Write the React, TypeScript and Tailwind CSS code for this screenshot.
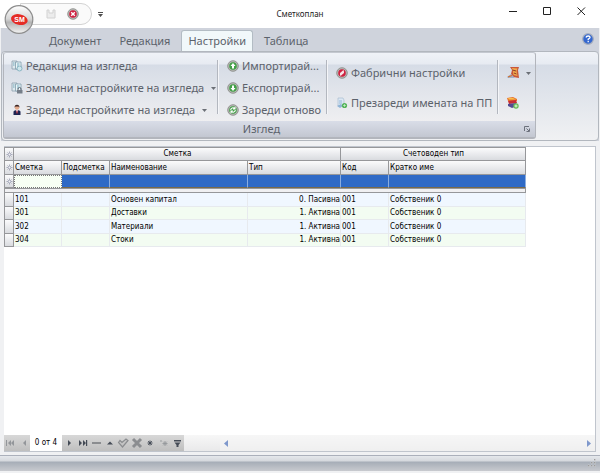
import React from 'react';

type IconProps = { className?: string };

const LayoutIcon: React.FC<{ lock?: boolean }> = ({ lock }) => (
  <svg viewBox="0 0 12 12" className="size-3 shrink-0">
    <path d="M1 1h5v8H1z" fill="#dfe9ee" stroke="#8ba0ac" strokeWidth=".8" />
    <path d="M4.500 2h5.500v7H4.500z" fill="#eaf4f7" stroke="#7f9dab" strokeWidth=".8" />
    <path d="M2 3h1.500M2 5h1.500M6 4h2.500M6 6h2" stroke="#67a3b5" strokeWidth=".9" />
    {lock ? (
      <>
        <path d="M7 8V7a1.500 1.500 0 0 1 3 0v1" fill="none" stroke="#5b6470" />
        <path d="M6 8h5.500v3.500H6z" fill="#757e89" />
      </>
    ) : (
      <circle cx="8.500" cy="8.500" r="2.500" fill="#cfe6ec" stroke="#7aa9b9" strokeWidth=".8" />
    )}
  </svg>
);

const PersonIcon = () => (
  <svg viewBox="0 0 12 12" className="size-3 shrink-0">
    <path d="M2.500 11V7.500Q3 6 6 6t3.500 1.500V11z" fill="#1d2452" />
    <circle cx="6" cy="3.500" r="2.300" fill="#e3aa8c" />
    <path d="M3.600 3.500Q3.500.7 6 .7t2.400 2.800L7.500 2.500h-3z" fill="#3a2422" />
    <path d="M5 6h2L6 9z" fill="#fff" />
    <path d="M6 6.500v3" stroke="#d4303c" />
  </svg>
);

const RoundIcon: React.FC<{ kind: 'up' | 'down' | 'reload' | 'factory' | 'close' }> = ({ kind }) => {
  const red = kind === 'factory' || kind === 'close';
  return (
    <svg viewBox="0 0 12 12" className="size-3 shrink-0">
      <circle cx="6" cy="6" r="5.300" fill="#b9b9b6" stroke="#848682" strokeWidth=".8" />
      <circle cx="6" cy="6" r="3.800" fill={red ? '#cf2140' : '#43a047'} />
      {kind === 'up' && <path d="M6 3 8.500 6H7v2.500H5V6H3.500z" fill="#fff" />}
      {kind === 'down' && <path d="M6 9 8.500 6H7V3.500H5V6H3.500z" fill="#fff" />}
      {kind === 'reload' && (
        <path d="M3.700 6a2.300 2.300 0 0 1 4-1.500M8.300 6a2.300 2.300 0 0 1-4 1.500M8 3v2H6M4 9V7h2" fill="none" stroke="#fff" strokeWidth="1.100" />
      )}
      {kind === 'factory' && <path d="M4 8V6l3.500-3L8 4.500v1.500L4.500 9z" fill="#f6e6e8" />}
      {kind === 'close' && <path d="m4.200 4.200 3.600 3.600m0-3.600L4.200 7.800" stroke="#fff" strokeWidth="1.400" />}
    </svg>
  );
};

const ReloadNamesIcon = () => (
  <svg viewBox="0 0 12 12" className="size-3 shrink-0">
    <path d="M2 1h5l1 2v6H2z" fill="#dbe7f3" stroke="#a9bdd1" strokeWidth=".7" />
    <path d="M3 4h3M3 6h3" stroke="#86aed3" strokeWidth=".8" />
    <path d="m1 9 4-2 2 2-3 2z" fill="#8fb4d6" />
    <circle cx="8.500" cy="8.500" r="2.600" fill="#54b35b" />
    <path d="M7.200 8.500h2.600M8.500 7.200v2.600" stroke="#c9efca" strokeWidth=".8" />
  </svg>
);

const ExportIcon = () => (
  <svg viewBox="0 0 14 14" className="size-3.5 shrink-0">
    <path d="M4 1h9l-1 3 1 8-6-1-2-3 1-4z" fill="#c9573a" />
    <path d="m6 2 5.500.5L10.500 5l1 5-4-1L7 5z" fill="#f0ab4e" />
    <path d="m6.500 4 3.500 1M8 7l2.500 1" stroke="#8b3d28" />
    <path d="m1 11 4-3 4 4H2z" fill="#a2b2cc" />
    <path d="m2 11 4-1.500" stroke="#d5722f" strokeWidth="1.200" />
  </svg>
);

const BooksIcon = () => (
  <svg viewBox="0 0 14 14" className="size-3.5 shrink-0">
    <path d="m1 2 6-1 4 2v2L2 5z" fill="#e9732c" />
    <path d="M2 2h5l3 1.500H3z" fill="#f8c04a" />
    <path d="m2 5 8-1 1 3-8 1z" fill="#c72d35" />
    <path d="m2 8 8-1 1 3-5 2-4-2z" fill="#534b91" />
    <circle cx="10" cy="10" r="2.700" fill="#66b956" />
    <path d="M8.500 10h3M10 8.500v3" stroke="#dff5d6" />
  </svg>
);

const SparkIcon: React.FC<IconProps> = ({ className = '' }) => (
  <svg viewBox="0 0 7 7" className={`mx-auto size-[7px] ${className}`}>
    <path d="M3.500.5v6M.5 3.500h6M1.500 1.500l4 4m0-4-4 4" stroke="#8d91a6" strokeWidth=".7" />
    <circle cx="3.500" cy="3.500" r="1" fill="#f1f1f4" />
  </svg>
);

const Caret = () => (
  <svg viewBox="0 0 5 3" className="h-[3px] w-[5px] shrink-0">
    <path d="M0 0h5L2.500 3z" fill="#6b6f76" />
  </svg>
);

interface RibbonButtonProps {
  icon: React.ReactNode;
  label: string;
  menu?: boolean;
}

const RibbonButton: React.FC<RibbonButtonProps> = ({ icon, label, menu }) => (
  <button type="button" className="flex h-[22px] items-center gap-[3px] whitespace-nowrap">
    {icon}
    <span>{label}</span>
    {menu && <span className="ml-1"><Caret /></span>}
  </button>
);

const Divider = () => <div className="my-[7px] w-px shrink-0 bg-[#b3b7bf] shadow-[1px_0_0_#f4f5f8]" />;

const tabs = ['Документ', 'Редакция', 'Настройки', 'Таблица'];

const rows = [
  { account: '101', name: 'Основен капитал', type: '0. Пасивна', code: '001', owner: 'Собственик 0' },
  { account: '301', name: 'Доставки', type: '1. Активна', code: '001', owner: 'Собственик 0' },
  { account: '302', name: 'Материали', type: '1. Активна', code: '001', owner: 'Собственик 0' },
  { account: '304', name: 'Стоки', type: '1. Активна', code: '001', owner: 'Собственик 0' },
];

const navButtons = [
  { label: 'Следващ', shape: <path d="M5 3v6l3-3z" fill="#444b56" /> },
  { label: 'Последен', shape: <path d="M2 3v6l3-3zM6 3v6l3-3zM9 3h1.200v6H9z" fill="#444b56" /> },
  { label: 'Изтрий', shape: <path d="M2 5h9v2H2z" fill="#8b8d90" /> },
  { label: 'Редактирай', shape: <path d="M3 7.500h6L6 4.500z" fill="#444b56" /> },
  { label: 'Потвърди', shape: <path d="M1.500 5.500 3 3.500l2 2L9 2l2 1.500L5.500 10z" fill="#c5c5c5" stroke="#8b8d90" strokeWidth="1.200" /> },
  { label: 'Откажи', shape: <path d="m2 2 8 8m0-8-8 8" stroke="#8b8d90" strokeWidth="3" /> },
  { label: 'Добави', shape: <path d="M6 3.500v5M3.500 6h5M4.200 4.200l3.600 3.600m0-3.600L4.200 7.800" stroke="#444b56" /> },
  { label: 'Вмъкни', shape: <path d="M3 3v2M7 4v5M4.500 6.500h5M5.200 4.700l3.600 3.600m0-3.600L5.200 8.300" stroke="#94979b" strokeWidth=".9" /> },
  { label: 'Филтър', shape: <path d="M3 3h7v1.500H3zM3.500 5.500h6L7.500 8v2h-2V8z" fill="#444b56" /> },
];

const TitleBar = () => (
  <header className="relative grid h-7 grid-cols-[1fr_auto_1fr] items-center bg-white text-[8px] text-[#222]">
    <div className="flex h-full items-center pl-5">
      <div className="mt-[-1px] flex h-[22px] w-[72px] items-center justify-end gap-[11px] rounded-r-full border border-[#d3d3d3] bg-[#fafafa] pr-3">
        <button type="button" aria-label="Запис">
          <svg viewBox="0 0 10 10" className="size-[10px]">
            <path d="M1 1h2v3h4V1h2v8H1z" fill="#ececec" stroke="#d2d2d2" />
          </svg>
        </button>
        <button type="button" aria-label="Затвори"><RoundIcon kind="close" /></button>
      </div>
      <button type="button" aria-label="Лента за бърз достъп" className="ml-1.5">
        <svg viewBox="0 0 5 5" className="size-[5px]">
          <path d="M0 0h5v1H0zM0 2h5L2.500 5z" fill="#4e4e4e" />
        </svg>
      </button>
    </div>
    <h1>Сметкоплан</h1>
    <div className="flex h-full items-start justify-end gap-[25px] pt-[7px] pr-3.5">
      <button type="button" aria-label="Минимизирай">
        <svg viewBox="0 0 9 9" className="size-[9px]"><path d="M0 4.500h8" stroke="#222" /></svg>
      </button>
      <button type="button" aria-label="Максимизирай">
        <svg viewBox="0 0 9 9" className="size-[9px]"><path d="M.5.5h7v7h-7z" fill="none" stroke="#222" /></svg>
      </button>
      <button type="button" aria-label="Изход">
        <svg viewBox="0 0 9 9" className="size-[9px]"><path d="m.5.5 7.500 7.500m0-7.500L.5 8" stroke="#222" /></svg>
      </button>
    </div>
    {/* Application orb hangs over the tab strip */}
    <button type="button" aria-label="Меню" className="absolute top-1 left-1">
      <svg viewBox="0 0 30 30" className="size-[30px]">
        <defs>
          <linearGradient id="orb" x1="0" y1="0" x2="0" y2="1">
            <stop offset="0" stopColor="#fff" />
            <stop offset=".48" stopColor="#d6d6d6" />
            <stop offset=".6" stopColor="#b4b4b4" />
            <stop offset="1" stopColor="#f3f3f3" />
          </linearGradient>
        </defs>
        <circle cx="15" cy="15.500" r="13.800" fill="url(#orb)" stroke="#8d8d8d" strokeWidth="1.200" />
        <ellipse cx="15.500" cy="15.500" rx="8.500" ry="5.300" fill="#e52b25" transform="rotate(12 15 15)" />
        <text x="15.500" y="18" textAnchor="middle" fontSize="7" fontWeight="bold" fill="#fff" fontFamily="Liberation Sans, sans-serif">SM</text>
      </svg>
    </button>
  </header>
);

const Ribbon = () => (
  <section className="mx-px bg-[#cfd3dc] text-[11px] leading-4 text-[#5c626b]">
    <nav className="flex h-[23px] items-end pl-[39px]">
      {tabs.map((tab) => (
        <button
          key={tab}
          type="button"
          className={
            tab === 'Настройки'
              ? 'mx-0.5 h-[21px] rounded-t-[3px] border border-b-0 border-[#b3bcc4] bg-[#f1f8fa] px-1.5'
              : 'h-[21px] px-[9px]'
          }
        >
          {tab}
        </button>
      ))}
      <button type="button" aria-label="Помощ" className="mr-[5px] mb-1.5 ml-auto">
        <svg viewBox="0 0 12 12" className="size-3">
          <circle cx="6" cy="6" r="5.300" fill="#3467cf" stroke="#a6aebd" strokeWidth="1.200" />
          <path d="M4 4.500Q4.300 3 6.200 3T8 4.700Q7.800 5.500 6.200 6.200v1M6.200 8v1.200" fill="none" stroke="#fff" strokeWidth="1.300" />
        </svg>
      </button>
    </nav>
    <div className="rounded-[4px] border border-[#b2b7be] bg-[linear-gradient(#eff2f7_0,#e7ebf2_12px,#d6dce6_13px,#f0f1f3_100%)] px-px pb-px">
      <div className="w-[533px] rounded-[3px] border border-b-2 border-[#b2b5bc] border-t-[#c4c8d0] bg-[linear-gradient(#eff2f7_0,#e7ebf2_11px,#d6dce6_12px,#efeff1_69px)]">
        <div className="flex h-[68px]">
          <div className="flex w-[213px] flex-col items-start pt-0.5 pl-[7px]">
            <RibbonButton icon={<LayoutIcon />} label="Редакция на изгледа" />
            <RibbonButton icon={<LayoutIcon lock />} label="Запомни настройките на изгледа" menu />
            <RibbonButton icon={<PersonIcon />} label="Зареди настройките на изгледа" menu />
          </div>
          <Divider />
          <div className="flex w-[108px] flex-col items-start pt-0.5 pl-[9px]">
            <RibbonButton icon={<RoundIcon kind="up" />} label="Импортирай..." />
            <RibbonButton icon={<RoundIcon kind="down" />} label="Експортирай..." />
            <RibbonButton icon={<RoundIcon kind="reload" />} label="Зареди отново" />
          </div>
          <Divider />
          <div className="flex w-[170px] flex-col items-start gap-2 pt-[9px] pl-[9px]">
            <RibbonButton icon={<RoundIcon kind="factory" />} label="Фабрични настройки" />
            <RibbonButton icon={<ReloadNamesIcon />} label="Презареди имената на ПП" />
          </div>
          <Divider />
          <div className="flex flex-col items-start gap-2 pt-[9px] pl-2">
            <button type="button" aria-label="Експорт" className="flex h-[22px] items-center gap-1.5">
              <ExportIcon />
              <Caret />
            </button>
            <button type="button" aria-label="Архив" className="flex h-[22px] items-center"><BooksIcon /></button>
          </div>
        </div>
        <footer className="grid h-4 grid-cols-[1fr_auto_1fr] items-center bg-linear-to-b from-[#d9dde8] to-[#c3c7d1]">
          <span className="col-start-2 pr-4">Изглед</span>
          <button type="button" aria-label="Още настройки" className="mr-[5px] justify-self-end">
            <svg viewBox="0 0 6 6" className="size-1.5">
              <path d="M.5 5V.5H5M2.500 2.500 5 5M5.500 2.500v3h-3" fill="none" stroke="#6c717c" />
            </svg>
          </button>
        </footer>
      </div>
    </div>
  </section>
);

const head = 'overflow-hidden border-r border-b border-[#96979a] bg-linear-to-b from-[#fbfbfc] to-[#d9dbdf] p-0 pl-px font-normal';
const cell = 'border-r border-b border-[#e7eaee] p-0 pl-px';

const AccountsTable = () => (
  <table className="w-[522px] table-fixed border-separate border-spacing-0 border-l border-[#96979a] text-left whitespace-nowrap">
    <colgroup>
      <col className="w-[9px]" />
      <col className="w-12" />
      <col className="w-12" />
      <col className="w-[138px]" />
      <col className="w-[93px]" />
      <col className="w-12" />
      <col className="w-[137px]" />
    </colgroup>
    <thead>
      <tr className="h-[14px]">
        <th className={`${head} border-t`}><SparkIcon /></th>
        <th colSpan={4} className={`${head} border-t text-center`}>Сметка</th>
        <th colSpan={2} className={`${head} border-t text-center`}>Счетоводен тип</th>
      </tr>
      <tr className="h-[14px]">
        <th className={head}><SparkIcon /></th>
        <th className={head}>Сметка</th>
        <th className={head}>Подсметка</th>
        <th className={head}>Наименование</th>
        <th className={head}>Тип</th>
        <th className={head}>Код</th>
        <th className={head}>Кратко име</th>
      </tr>
    </thead>
    <tbody>
      <tr className="h-[13px]">
        <td className={head}><SparkIcon /></td>
        <td className="border border-dotted border-[#777] bg-[#f7fff4] p-0">
          <input aria-label="Сметка" className="block h-[11px] w-full outline-none" />
        </td>
        {[1, 2, 3, 4, 5].map((n) => (
          <td key={n} className="border-r border-b border-r-[#8caee0] border-b-[#796a4b] bg-[#2f6ac6] p-0" />
        ))}
      </tr>
      <tr>
        <td colSpan={7} className="h-[5px] border-y border-r border-[#96979a] bg-[#f0f0f2] p-0" />
      </tr>
      {rows.map((row) => (
        <tr key={row.account} className="h-[14px] odd:bg-[#f0f7ff] even:h-[13px] even:bg-[#f3fcf2]">
          <td className={head} />
          <td className={cell}>{row.account}</td>
          <td className={cell} />
          <td className={cell}>{row.name}</td>
          <td className={`${cell} text-right`}>{row.type}</td>
          <td className={cell}>{row.code}</td>
          <td className={cell}>{row.owner}</td>
        </tr>
      ))}
    </tbody>
  </table>
);

const Navigator = () => (
  <div className="flex h-4 bg-linear-to-b from-[#f7f7f7] to-[#e9e9ea]">
    <div className="flex items-center bg-linear-to-b from-[#d8d8d8] to-[#bfbfbf]">
      <button type="button" aria-label="Първи" className="w-[14px]">
        <svg viewBox="0 0 12 12" className="size-3"><path d="M2 3h1v6H2zM7 3v6L4 6zM10 3v6L7 6z" fill="#93969a" /></svg>
      </button>
      <button type="button" aria-label="Предишен" className="w-3">
        <svg viewBox="0 0 12 12" className="size-3"><path d="M8 3v6L5 6z" fill="#93969a" /></svg>
      </button>
      <span className="h-full w-8 bg-white text-center leading-4 whitespace-nowrap">0 от 4</span>
      {navButtons.map(({ label, shape }) => (
        <button key={label} type="button" aria-label={label} className="flex justify-center odd:w-[13px] even:w-[14px]">
          <svg viewBox="0 0 12 12" fill="none" className="size-3">{shape}</svg>
        </button>
      ))}
    </div>
    <div className="ml-9 flex grow items-center justify-between bg-[#f6f6f6]/50 px-1">
      <svg viewBox="0 0 4 7" className="h-[7px] w-1"><path d="M4 0v7L0 3.500z" fill="#7f98cc" /></svg>
      <svg viewBox="0 0 4 7" className="h-[7px] w-1"><path d="M0 0v7l4-3.500z" fill="#7f98cc" /></svg>
    </div>
  </div>
);

export default function App() {
  return (
    <div className="flex min-h-screen flex-col bg-[#f0f1f3] font-[Noto_Sans,sans-serif]">
      <TitleBar />
      <Ribbon />
      <main className="mx-1 mt-[5px] flex grow flex-col border border-l-0 border-[#c0c5cd] bg-white font-[DejaVu_Sans_Condensed,sans-serif] text-[8px] leading-3 text-black">
        <div className="grow"><AccountsTable /></div>
        <Navigator />
      </main>
      <footer className="mt-[3px] mb-0.5 flex h-4 items-end justify-end border-t border-[#abb0bb] bg-[linear-gradient(#e5e8ec_0,#d5d8dd_5px,#a6adb7_6px,#c8cacf_100%)] pr-1 pb-1">
        <svg viewBox="0 0 8 8" className="size-2">
          <path d="M6 0h1.500v1.500H6zM3 3h1.500v1.500H3zM6 3h1.500v1.500H6zM0 6h1.500v1.500H0zM3 6h1.500v1.500H3zM6 6h1.500v1.500H6z" fill="#777" stroke="#fff" strokeWidth=".3" />
        </svg>
      </footer>
    </div>
  );
}
